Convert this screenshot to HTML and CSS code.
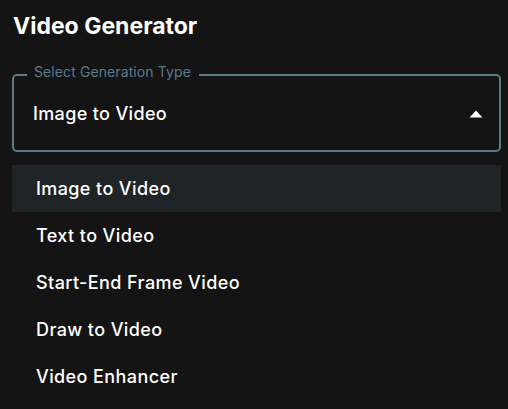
FILE: index.html
```html
<!DOCTYPE html>
<html lang="en">
<head>
<meta charset="utf-8">
<title>Video Generator</title>
<link rel="stylesheet" href="styles.css">
</head>
<body>
<main class="panel">
  <h1 class="title">Video Generator</h1>
  <div class="select">
    <span class="select-label">Select Generation Type</span>
    <span class="select-value">Image to Video</span>
    <svg class="select-arrow" width="14" height="8" viewBox="0 0 14 8" aria-hidden="true"><path d="M0.5 7.5 L7 0.5 L13.5 7.5 Z" fill="#ffffff"/></svg>
  </div>
  <ul class="menu">
    <li class="menu-item is-active">Image to Video</li>
    <li class="menu-item">Text to Video</li>
    <li class="menu-item">Start-End Frame Video</li>
    <li class="menu-item">Draw to Video</li>
    <li class="menu-item">Video Enhancer</li>
  </ul>
</main>
</body>
</html>
```

FILE: styles.css
```css
* { box-sizing: border-box; }
html, body {
  margin: 0;
  padding: 0;
  background: #141414;
  height: 100%;
}
body {
  font-family: Inter, "Noto Sans", "Liberation Sans", sans-serif;
  color: #ffffff;
}
.panel {
  padding: 12px 7px 0 12px;
  display: flex;
  flex-direction: column;
}
.title {
  margin: 0 0 0 1px;
  font-size: 23px;
  line-height: 28px;
  font-weight: 700;
}
.select {
  position: relative;
  margin-top: 34px;
  height: 78px;
  border: 2px solid #5b7b8b;
  border-radius: 5px;
  display: flex;
  align-items: center;
  padding: 2px 16px 0 19px;
}
.select-label {
  position: absolute;
  left: 13px;
  top: -12px;
  padding: 0 8px 0 7px;
  background: #141414;
  color: #5b7b8b;
  font-size: 14px;
  line-height: 16px;
  letter-spacing: 0.1px;
}
.select-value {
  flex: 1;
  font-size: 18px;
  line-height: 24px;
  font-weight: 500;
  letter-spacing: 0.35px;
}
.select-arrow {
  display: block;
}
.menu {
  list-style: none;
  margin: 13px 0 0 0;
  padding: 0;
}
.menu-item {
  height: 47px;
  display: flex;
  align-items: center;
  padding-left: 24px;
  font-size: 18px;
  font-weight: 500;
  letter-spacing: 0.4px;
}
.menu-item.is-active {
  background: #1f2427;
}
```
